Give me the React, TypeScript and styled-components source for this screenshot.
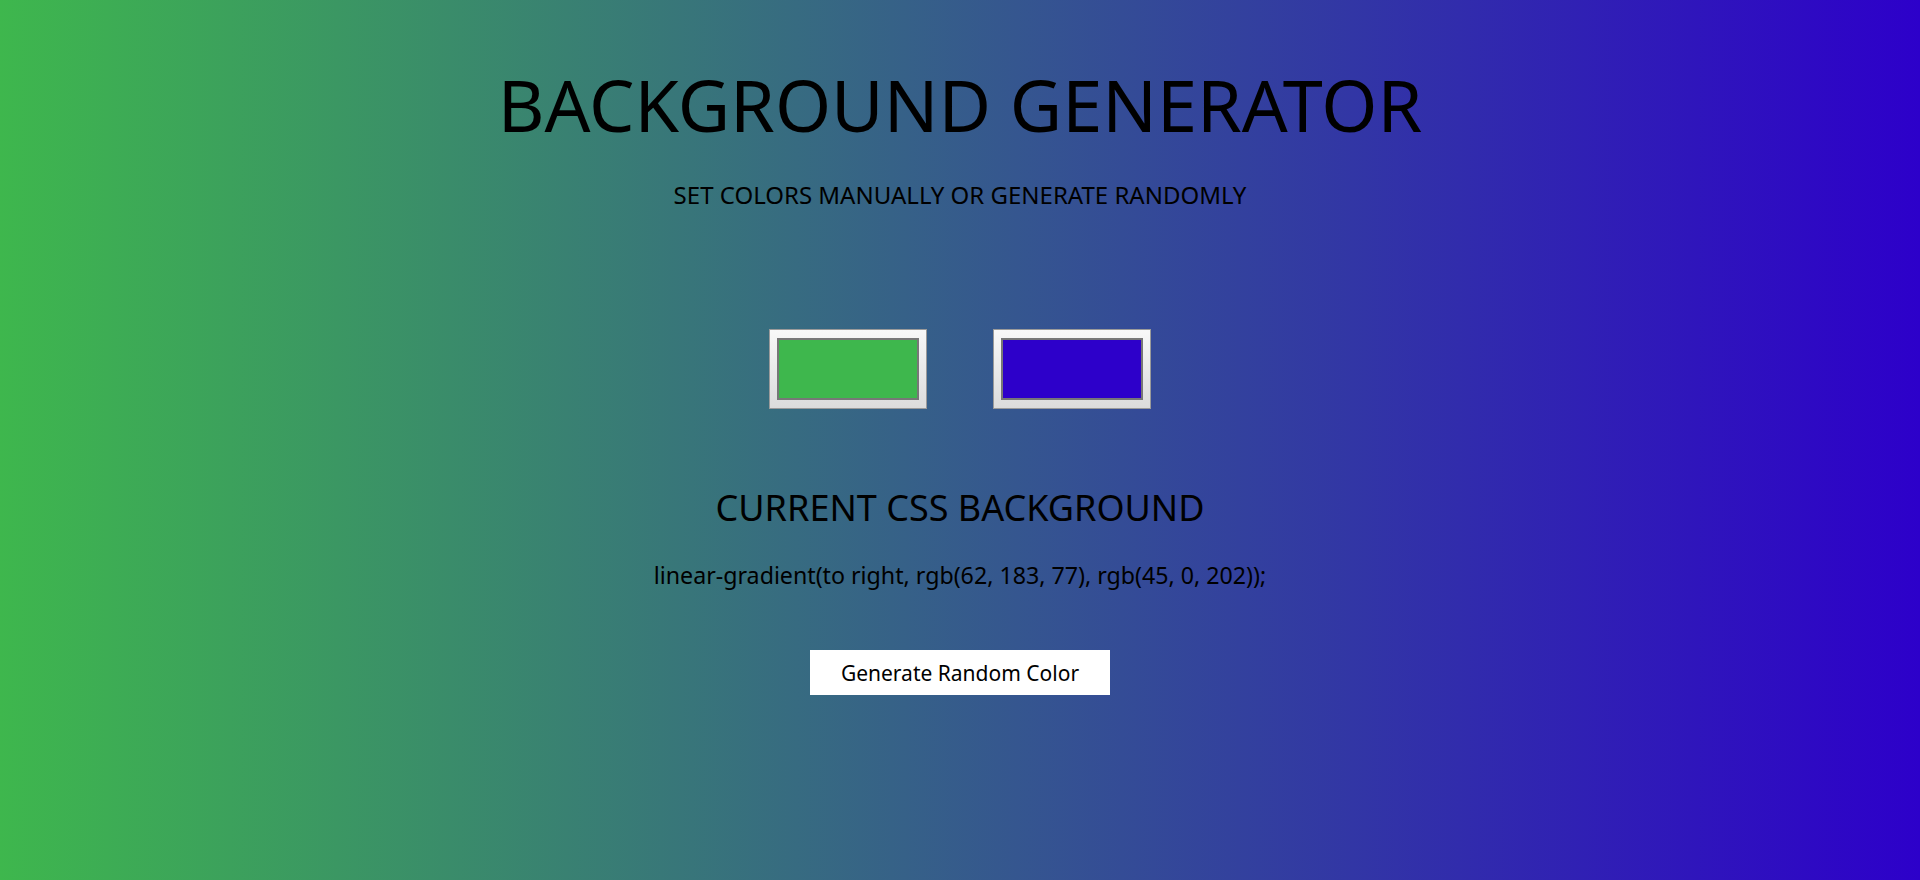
import React, { useState } from "react";
import styled, { createGlobalStyle } from "styled-components";

const Global = createGlobalStyle`
  html, body { margin: 0; padding: 0; }
  body {
    min-height: 100vh;
    font-family: "Noto Sans", "Open Sans", sans-serif;
    background: linear-gradient(to right, rgb(62, 183, 77), rgb(45, 0, 202));
    color: #000;
  }
`;

const Page = styled.main`
  display: flex;
  flex-direction: column;
  align-items: center;
  text-align: center;
  padding-top: 68px;
`;

const Title = styled.h1`
  margin: 0;
  font-size: 72px;
  font-weight: 400;
  line-height: 72px;
`;

const Subtitle = styled.h3`
  margin: 43px 0 0;
  font-size: 24px;
  font-weight: 400;
  line-height: 24px;
`;

const Pickers = styled.div`
  display: flex;
  gap: 66px;
  margin-top: 122px;
`;

const ColorInput = styled.input`
  -webkit-appearance: none;
  appearance: none;
  box-sizing: border-box;
  width: 158px;
  height: 80px;
  padding: 8px 7px;
  margin: 0;
  border: 1px solid #9a9a9a;
  background: linear-gradient(#f8f8f8, #dcdcdc);
  cursor: pointer;
  &::-webkit-color-swatch-wrapper { padding: 0; }
  &::-webkit-color-swatch { border: 2px solid #777; border-radius: 0; }
`;

const Heading = styled.h2`
  margin: 81px 0 0;
  font-size: 36px;
  font-weight: 400;
  line-height: 36px;
`;

const Code = styled.h3`
  margin: 38px 0 0;
  font-size: 23.2px;
  font-weight: 400;
  line-height: 23px;
`;

const Button = styled.button`
  margin-top: 63px;
  width: 300px;
  height: 45px;
  padding: 0;
  border: none;
  background: #fff;
  font-family: inherit;
  font-size: 21px;
  color: #000;
  cursor: pointer;
`;

export default function App() {
  const [a, setA] = useState("#3eb74d");
  const [b, setB] = useState("#2d00ca");
  return (
    <>
      <Global />
      <Page>
        <Title>BACKGROUND GENERATOR</Title>
        <Subtitle>SET COLORS MANUALLY OR GENERATE RANDOMLY</Subtitle>
        <Pickers>
          <ColorInput type="color" value={a} onChange={(e) => setA(e.target.value)} />
          <ColorInput type="color" value={b} onChange={(e) => setB(e.target.value)} />
        </Pickers>
        <Heading>CURRENT CSS BACKGROUND</Heading>
        <Code>linear-gradient(to right, rgb(62, 183, 77), rgb(45, 0, 202));</Code>
        <Button>Generate Random Color</Button>
      </Page>
    </>
  );
}
